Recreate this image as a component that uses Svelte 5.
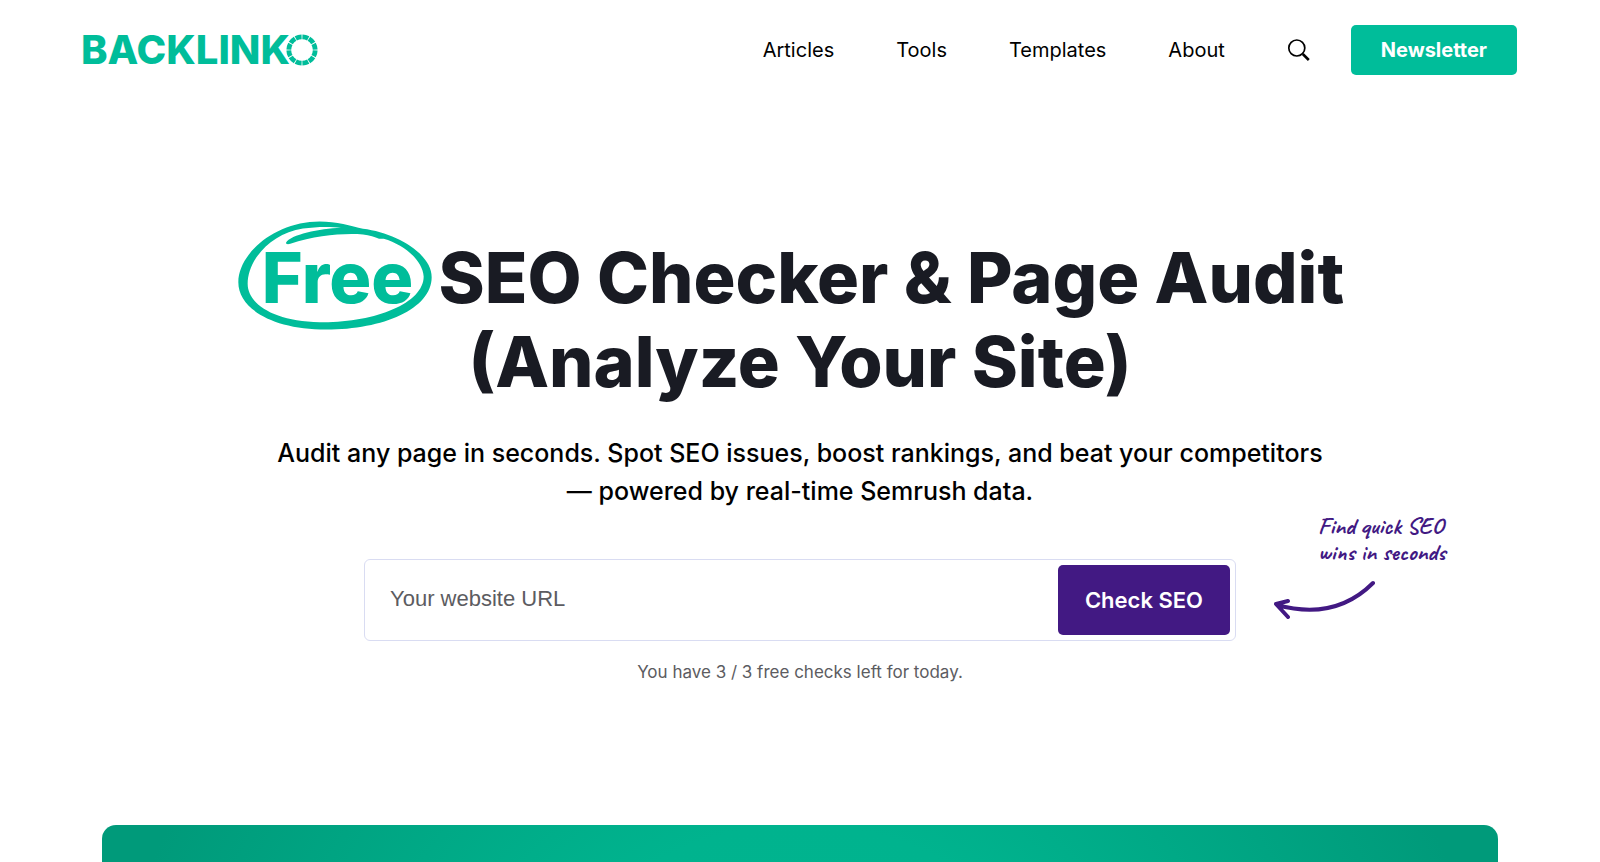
<script>
  const links = ["Articles", "Tools", "Templates", "About"];
  const checksTotal = 3;

  let url = "";
  let checksLeft = checksTotal;

  function handleSubmit() {
    if (url.trim() && checksLeft > 0) {
      checksLeft -= 1;
    }
  }
</script>

<div class="page">
  <header>
    <a class="logo" href="/" aria-label="Backlinko">
      <span>BACKLINK</span>
      <svg viewBox="0 0 32 32" width="32" height="32" aria-hidden="true">
        <circle class="ring" cx="16" cy="16" r="13.2" pathLength="120" />
      </svg>
    </a>

    <nav>
      {#each links as link}
        <a href="/{link.toLowerCase()}">{link}</a>
      {/each}
      <button class="search" aria-label="Search">
        <svg viewBox="0 0 24 24" width="24" height="24" aria-hidden="true">
          <circle cx="9.8" cy="10" r="8" />
          <path class="handle" d="M15.8 16l6 6" />
        </svg>
      </button>
      <a class="newsletter" href="/newsletter">Newsletter</a>
    </nav>
  </header>

  <main>
    <h1>
      <span class="free">
        Free
        <svg viewBox="55 62 582 326" aria-hidden="true">
          <path
            fill-rule="evenodd"
            d="M56 245C56 160 165 63 300 63C350 63 395 76 430 85C530 97 636 160 636 230C636 325 490 387 320 387C160 387 56 325 56 245Z
            M84 250C84 180 150 100 250 84C290 78 335 78 364 82C300 84 212 103 199 127C198 131 204 132 212 130C290 104 370 98 430 102C450 104 466 110 478 115L492 115C555 133 609 180 612 228C612 310 460 368 300 365C160 362 84 310 84 250Z"
          />
        </svg>
      </span>
      SEO Checker &amp; Page Audit<br />(Analyze Your Site)
    </h1>
    <p class="lead">
      Audit any page in seconds. Spot SEO issues, boost rankings, and beat your competitors —
      powered by real-time Semrush data.
    </p>

    <div class="checker">
      <form on:submit|preventDefault={handleSubmit}>
        <input
          type="text"
          placeholder="Your website URL"
          aria-label="Your website URL"
          autocomplete="off"
          bind:value={url}
        />
        <button type="submit">Check SEO</button>
      </form>
      <div class="note">
        <p>Find quick SEO<br />wins in seconds</p>
        <svg viewBox="0 0 104 40" width="104" height="40" aria-hidden="true">
          <path d="M101 4Q63 42 5 26M16 22L4 25L16 38" />
        </svg>
      </div>
    </div>
    <p class="hint">You have {checksLeft} / {checksTotal} free checks left for today.</p>
  </main>

  <section class="banner"></section>
</div>

<style>
  :global(body) {
    margin: 0;
    background: #ffffff;
  }

  .page {
    display: flex;
    flex-direction: column;
    min-height: 100vh;
    color: #191b23;
    font-family: Inter, "Liberation Sans", sans-serif;
  }

  header {
    display: flex;
    justify-content: space-between;
    align-items: center;
    height: 100px;
    padding: 0 83px 0 81px;
  }

  a {
    color: inherit;
    text-decoration: none;
  }

  .logo {
    display: flex;
    align-items: center;
    color: #00bd9a;
    font-size: 40px;
    font-weight: 800;
    line-height: 48px;
  }

  .logo svg {
    margin-left: -4px;
  }

  .ring {
    fill: none;
    stroke: #00bd9a;
    stroke-width: 4.8;
    stroke-dasharray: 8.8 1.2;
    stroke-dashoffset: -0.6;
  }

  nav {
    display: flex;
    align-items: center;
    gap: 62px;
    color: #000000;
    font-size: 20px;
  }

  .search {
    display: flex;
    padding: 0;
    border: none;
    background: none;
    cursor: pointer;
  }

  .search svg {
    fill: none;
    stroke: #000000;
    stroke-width: 1.7;
  }

  .search .handle {
    stroke-width: 2.6;
  }

  .newsletter {
    margin-left: -22px;
    padding: 0 30px;
    border-radius: 5px;
    background: #00bd9a;
    color: #ffffff;
    font-weight: 700;
    line-height: 50px;
  }

  main {
    padding-top: 136px;
    text-align: center;
  }

  h1 {
    margin: 0;
    font-size: 70px;
    font-weight: 800;
    line-height: 84px;
  }

  .free {
    position: relative;
    margin: 0 10px 0 6px;
    color: #00bd9a;
  }

  .free svg {
    position: absolute;
    top: -14px;
    left: -24px;
    width: 194px;
    height: 109px;
    fill: #00bd9a;
  }

  .lead {
    max-width: 1060px;
    margin: 30px auto 49px;
    color: #000000;
    font-size: 25px;
    font-weight: 500;
    line-height: 38px;
  }

  .checker {
    display: grid;
    grid-template-columns: 1fr minmax(auto, 872px) 1fr;
    align-items: start;
  }

  form {
    display: flex;
    grid-column: 2;
    box-sizing: border-box;
    height: 82px;
    padding: 5px;
    border: 1px solid #d9dcf2;
    border-radius: 6px;
  }

  input {
    flex: 1;
    min-width: 0;
    padding: 0 20px 2px;
    border: none;
    outline: none;
    background: none;
    font-family: "Liberation Sans", Arial, sans-serif;
    font-size: 22px;
  }

  input::placeholder {
    color: #5c5c61;
    opacity: 1;
  }

  form button {
    padding: 0 27px;
    border: none;
    border-radius: 5px;
    background: #421983;
    color: #ffffff;
    font-family: inherit;
    font-size: 22px;
    font-weight: 600;
    cursor: pointer;
  }

  .note {
    justify-self: start;
    margin: -46px 0 -20px 36px;
    color: #421983;
  }

  .note p {
    margin: 0 0 14px 46px;
    font-family: Caveat, cursive;
    font-size: 24px;
    font-weight: 700;
    line-height: 26px;
    text-align: left;
  }

  .note svg {
    display: block;
    fill: none;
    stroke: #421983;
    stroke-width: 4;
    stroke-linecap: round;
    stroke-linejoin: round;
  }

  .hint {
    margin: 18px 0 140px;
    color: #5c5c61;
    font-size: 17px;
    line-height: 26px;
  }

  .banner {
    flex: 1;
    margin: 0 102px;
    border-radius: 14px 14px 0 0;
    background: radial-gradient(circle at 50% 300px, #00b691 0, #00b38e 300px, #009a7a 700px);
  }
</style>
